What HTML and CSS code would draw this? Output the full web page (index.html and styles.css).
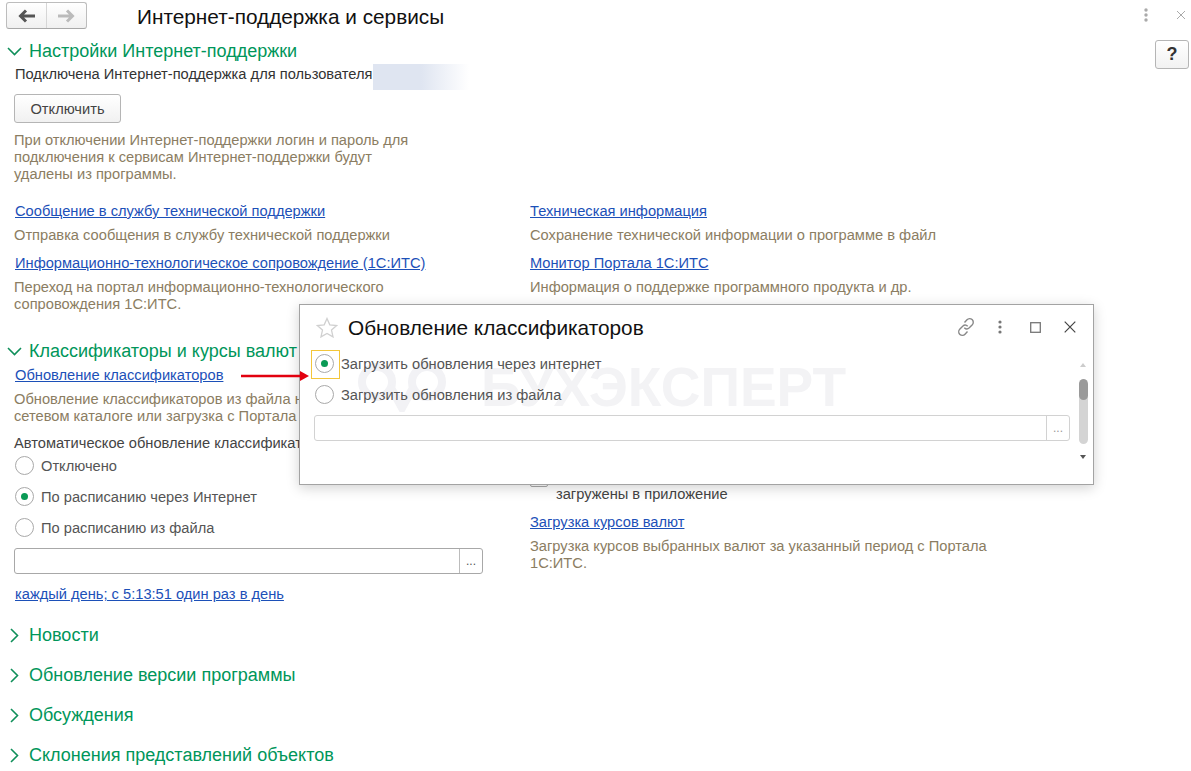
FILE: index.html
```html
<!DOCTYPE html>
<html lang="ru">
<head>
<meta charset="utf-8">
<title>Интернет-поддержка и сервисы</title>
<link rel="stylesheet" href="styles.css">
</head>
<body>
<div class="page">
  <header class="topbar">
    <div class="navgroup">
      <button class="navbtn"><svg width="17" height="14" viewBox="0 0 17 14"><path d="M2 7h15M8 1.500 2.500 7 8 12.500" fill="none" stroke="#555" stroke-width="3"/></svg></button>
      <button class="navbtn"><svg width="17" height="14" viewBox="0 0 17 14"><path d="M0 7h15M9 1.500 14.500 7 9 12.500" fill="none" stroke="#bbb" stroke-width="3"/></svg></button>
    </div>
    <h1 class="pagetitle">Интернет-поддержка и сервисы</h1>
    <div class="topactions">
      <svg class="kebab" width="4" height="14" viewBox="0 0 4 14"><circle cx="2" cy="2" r="1.700"/><circle cx="2" cy="7" r="1.700"/><circle cx="2" cy="12" r="1.700"/></svg>
      <svg width="10" height="10" viewBox="0 0 10 10"><path d="M1 1l8 8M9 1 1 9" stroke="#aaa" fill="none"/></svg>
    </div>
  </header>

  <section class="group first">
    <div class="grouphead">
      <svg class="chev" width="15" height="9" viewBox="0 0 15 9"><path d="M1 1l6.500 6.500L14 1" fill="none" stroke="#0f8f5a" stroke-width="1.600"/></svg>
      <h2>Настройки Интернет-поддержки</h2>
      <button class="help">?</button>
    </div>
    <div class="body">
      <div class="userline"><span class="usertext">Подключена Интернет-поддержка для пользователя</span><span class="blur"></span></div>
      <button class="btn">Отключить</button>
      <p class="desc narrow">При отключении Интернет-поддержки логин и пароль для подключения к сервисам Интернет-поддержки будут удалены из программы.</p>
      <div class="cols links">
        <div class="col">
          <a href="#" class="link">Сообщение в службу технической поддержки</a>
          <p class="desc">Отправка сообщения в службу технической поддержки</p>
          <a href="#" class="link">Информационно-технологическое сопровождение (1С:ИТС)</a>
          <p class="desc narrow">Переход на портал информационно-технологического сопровождения 1С:ИТС.</p>
        </div>
        <div class="col">
          <a href="#" class="link">Техническая информация</a>
          <p class="desc">Сохранение технической информации о программе в файл</p>
          <a href="#" class="link">Монитор Портала 1С:ИТС</a>
          <p class="desc">Информация о поддержке программного продукта и др.</p>
        </div>
      </div>
    </div>
  </section>

  <section class="group second">
    <div class="grouphead">
      <svg class="chev" width="15" height="9" viewBox="0 0 15 9"><path d="M1 1l6.500 6.500L14 1" fill="none" stroke="#0f8f5a" stroke-width="1.600"/></svg>
      <h2>Классификаторы и курсы валют</h2>
    </div>
    <div class="body cols">
      <div class="col">
        <a href="#" class="link">Обновление классификаторов</a>
        <p class="desc wide">Обновление классификаторов из файла на локальном диске, в сетевом каталоге или загрузка с Портала 1С:ИТС.</p>
        <div class="autolabel">Автоматическое обновление классификаторов</div>
        <div class="radio"><i class="dot"></i>Отключено</div>
        <div class="radio"><i class="dot on"></i>По расписанию через Интернет</div>
        <div class="radio"><i class="dot"></i>По расписанию из файла</div>
        <div class="field"><span class="pick">...</span></div>
        <a href="#" class="link schedule">каждый день; с 5:13:51 один раз в день</a>
      </div>
      <div class="col rightcol">
        <div class="checkrow"><i class="check"></i><span>загружены в приложение</span></div>
        <a href="#" class="link">Загрузка курсов валют</a>
        <p class="desc wide">Загрузка курсов выбранных валют за указанный период с Портала 1С:ИТС.</p>
      </div>
    </div>
  </section>

  <section class="group closed"><div class="grouphead"><svg class="chev" width="9" height="15" viewBox="0 0 9 15"><path d="M1 1l6.500 6.500L1 14" fill="none" stroke="#0f8f5a" stroke-width="1.600"/></svg><h2>Новости</h2></div></section>
  <section class="group closed"><div class="grouphead"><svg class="chev" width="9" height="15" viewBox="0 0 9 15"><path d="M1 1l6.500 6.500L1 14" fill="none" stroke="#0f8f5a" stroke-width="1.600"/></svg><h2>Обновление версии программы</h2></div></section>
  <section class="group closed"><div class="grouphead"><svg class="chev" width="9" height="15" viewBox="0 0 9 15"><path d="M1 1l6.500 6.500L1 14" fill="none" stroke="#0f8f5a" stroke-width="1.600"/></svg><h2>Обсуждения</h2></div></section>
  <section class="group closed"><div class="grouphead"><svg class="chev" width="9" height="15" viewBox="0 0 9 15"><path d="M1 1l6.500 6.500L1 14" fill="none" stroke="#0f8f5a" stroke-width="1.600"/></svg><h2>Склонения представлений объектов</h2></div></section>

  <div class="dialog">
    <div class="watermark">
      <svg class="wmlogo" width="88" height="50" viewBox="0 0 88 50"><g fill="none" stroke="#f2f2f5" stroke-width="8"><circle cx="19" cy="20" r="15"/><circle cx="69" cy="20" r="15"/><path d="M32 24 44 46 56 24"/></g></svg>
      <span>БУХЭКСПЕРТ</span>
    </div>
    <div class="dlghead">
      <svg class="star" width="22" height="21" viewBox="0 0 22 21"><path d="M11 1.500l2.800 6.300 6.900.7-5.200 4.600 1.500 6.800L11 16.400l-6 3.500 1.500-6.800L1.300 8.500l6.900-.7z" fill="none" stroke="#d0d0d0" stroke-width="1.300"/></svg>
      <h3>Обновление классификаторов</h3>
      <div class="dlgactions">
        <svg width="20" height="20" viewBox="0 0 20 20"><g fill="none" stroke="#888" stroke-width="1.400"><path d="M8.500 5.500l2.500-2.700a3.600 3.600 0 0 1 5.300 4.900l-3 3.100a3.600 3.600 0 0 1-5-.1"/><path d="M11.500 14.500 9 17.200a3.600 3.600 0 0 1-5.300-4.900l3-3.100a3.600 3.600 0 0 1 5 .1"/></g></svg>
        <svg width="6" height="14" viewBox="0 0 6 14"><g fill="#777"><circle cx="3" cy="2" r="1.600"/><circle cx="3" cy="7" r="1.600"/><circle cx="3" cy="12" r="1.600"/></g></svg>
        <svg width="11" height="11" viewBox="0 0 11 11"><rect x=".7" y=".7" width="9.600" height="9.600" fill="none" stroke="#777" stroke-width="1.300"/></svg>
        <svg width="12" height="12" viewBox="0 0 12 12"><path d="M.7.700l10.600 10.600M11.300.7.700 11.300" stroke="#444" stroke-width="1.200" fill="none"/></svg>
      </div>
    </div>
    <div class="dlgbody">
      <div class="dlgform">
        <div class="radio focus"><i class="dot on"></i>Загрузить обновления через интернет</div>
        <div class="radio"><i class="dot"></i>Загрузить обновления из файла</div>
        <div class="field light"><span class="pick">...</span></div>
      </div>
      <div class="scroll">
        <i class="up"></i>
        <div class="track"><div class="thumb"></div></div>
        <i class="down"></i>
      </div>
    </div>
  </div>

  <svg class="arrow" width="68" height="10" viewBox="0 0 68 10"><path d="M0 5h60" stroke="#e2000f" stroke-width="2.600"/><path d="M59 0 68 5l-9 5z" fill="#e2000f"/></svg>
</div>
</body>
</html>
```
FILE: styles.css
```css
* { box-sizing: border-box; }
html, body { margin: 0; padding: 0; background: #fff; }
body { font-family: "Liberation Sans", Arial, sans-serif; font-size: 14.67px; color: #333; }
.page { position: relative; width: 1191px; height: 771px; overflow: hidden; }

.topbar { height: 34px; padding: 2px 5px 0 6px; display: flex; align-items: flex-start; }
.navgroup { display: flex; width: 81px; height: 27px; border: 1px solid #bdbdbd; border-bottom-color: #a8a8a8; border-radius: 3px; background: linear-gradient(#fff, #f0f0f0); overflow: hidden; }
.navbtn { flex: 1; border: 0; padding: 0; background: none; display: flex; align-items: center; justify-content: center; }
.navbtn + .navbtn { border-left: 1px solid #d6d6d6; }
.pagetitle { margin: 2px 0 0 50px; font-size: 20.8px; line-height: 26px; font-weight: 400; color: #111; }
.topactions { margin-left: auto; display: flex; align-items: center; gap: 28px; height: 26px; }
.kebab { fill: #aaa; }

.group { padding-left: 7px; }
.grouphead { display: flex; align-items: center; height: 24px; }
.grouphead h2 { margin: 0; font-size: 18px; line-height: 24px; font-weight: 400; color: #00965a; }
.chev { margin-right: 7px; flex: none; }
.closed .chev { margin: 0 10px 0 3px; }
.first { padding-top: 5px; }
.first .body { padding-top: 1px; }
.second { margin-top: 26px; }
.closed { height: 40px; }
.second + .closed { margin-top: 20px; }
.help { align-self: flex-start; margin: 1px 2px 0 auto; width: 34px; height: 29px; flex: none; border: 1px solid #b5b5b5; border-radius: 3px; background: linear-gradient(#fff, #f2f2f2); font: 700 18px "Liberation Sans", Arial, sans-serif; color: #333; padding: 0; }

.body { padding-left: 7px; }
.userline { display: flex; height: 26px; color: #333; }
.usertext { padding-left: 1px; line-height: 20px; }
.blur { width: 96px; height: 26px; background: linear-gradient(90deg, #dfe5f1, #dfe5f1 50%, #fff); }
.btn { display: block; margin-top: 4px; width: 107px; height: 29px; border: 1px solid #b5b5b5; border-radius: 3px; background: linear-gradient(#fff, #f1f1f1); font: 14.67px "Liberation Sans", Arial, sans-serif; color: #444; padding: 0; }
.desc { margin: 0; color: #8b7d62; line-height: 17px; }
.narrow { max-width: 400px; }
.wide { max-width: 470px; }
.btn + .desc { margin-top: 9px; }
.cols { display: flex; }
.col { width: 516px; display: flex; flex-direction: column; align-items: flex-start; }
.links { margin-top: 20px; }
.link { color: #1c50b8; line-height: 17px; text-decoration: underline; margin-left: 1px; }
.col + .col .link { margin-left: 0; }
.col > .desc { margin-top: 7px; margin-bottom: 11px; }
.col > .desc:last-child { margin-bottom: 0; }
.second .body { padding-top: 4px; }
.autolabel { margin-top: -1px; color: #444; line-height: 17px; margin-bottom: -2px; white-space: nowrap; }
.radio { display: flex; align-items: center; height: 31px; color: #555; gap: 7px; padding-left: 1px; }
.dot { width: 19px; height: 19px; border: 1px solid #a9a9a9; border-radius: 50%; background: #fff; position: relative; flex: none; }
.dot.on::after { content: ""; position: absolute; left: 5px; top: 5px; width: 7px; height: 7px; border-radius: 50%; background: #0a9a55; }
.field { width: 469px; height: 26px; border: 1px solid #a8a8a8; border-radius: 3px; margin-top: 5px; display: flex; justify-content: flex-end; background: #fff; }
.pick { width: 23px; border-left: 1px solid #bcbcbc; text-align: center; font-size: 12px; line-height: 24px; color: #555; }
.schedule { margin-top: 12px; }
.rightcol { padding-top: 119px; }
.checkrow { display: flex; height: 17px; line-height: 17px; align-items: center; position: relative; color: #444; padding-left: 26px; margin-bottom: 11px; }
.check { position: absolute; left: 0; top: -9px; width: 18px; height: 10px; border: 1px solid #aaa; border-radius: 2px; }

.arrow { position: absolute; left: 241px; top: 371px; }

.dialog { position: absolute; left: 299px; top: 304px; width: 795px; height: 181px; background: #fff; border: 1px solid #a3a3a3; box-shadow: 0 3px 12px rgba(0,0,0,.18); }
.watermark { position: absolute; left: 58px; top: 57px; display: flex; align-items: flex-start; gap: 35px; font-size: 55px; font-weight: 700; color: #f3f3f5; line-height: 50px; white-space: nowrap; }
.wmlogo { flex: none; }
.dlghead { position: relative; display: flex; align-items: center; height: 43px; padding: 1px 17px 0 16px; }
.star { flex: none; }
.dlghead h3 { margin: 2px 0 0 10px; font-size: 20.8px; font-weight: 400; color: #111; }
.dlgactions { margin-left: auto; display: flex; align-items: center; }
.dlgactions svg:nth-child(1) { margin-right: 21px; }
.dlgactions svg:nth-child(2) { margin-right: 27px; }
.dlgactions svg:nth-child(3) { margin-right: 23px; }
.dlgbody { position: relative; display: flex; }
.dlgform { width: 770px; padding-left: 14px; }
.dlgform .radio { position: relative; }
.focus::before { content: ""; position: absolute; left: -3px; top: 2px; width: 27px; height: 27px; border: 1px solid #f3c63a; }
.dlgform .field { width: 756px; margin-top: 5px; border-color: #d2d2d2; }
.dlgform .pick { border-color: #d2d2d2; color: #999; }
.scroll { width: 12px; margin-left: 7px; display: flex; flex-direction: column; align-items: center; padding-top: 15px; }
.up { width: 0; height: 0; border: 3px solid transparent; border-top: 0; border-bottom: 4px solid #ccc; }
.track { width: 9px; height: 65px; margin-top: 12px; border-radius: 5px; background: #d4d4d4; overflow: hidden; flex: none; }
.thumb { height: 21px; border-radius: 5px; background: #9a9a9a; }
.down { width: 0; height: 0; margin-top: 11px; border: 3px solid transparent; border-bottom: 0; border-top: 4px solid #555; }
```
